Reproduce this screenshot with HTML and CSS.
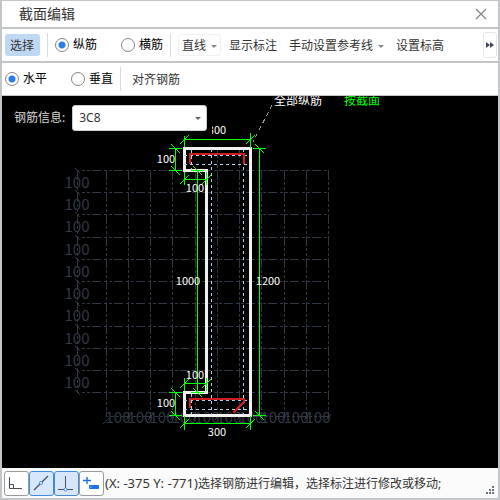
FILE: index.html
```html
<!DOCTYPE html>
<html lang="zh-CN">
<head>
<meta charset="utf-8">
<title>截面编辑</title>
<link rel="stylesheet" href="styles.css">
</head>
<body>
<main class="dialog">
  <header class="titlebar">
    <h1 class="title">截面编辑</h1>
    <button class="close" type="button" aria-label="关闭">
      <svg width="12" height="12" viewBox="0 0 12 12"><path d="M1 1L11 11M11 1L1 11" stroke="#858585" stroke-width="1.3" fill="none"/></svg>
    </button>
  </header>

  <div class="toolbar">
    <button class="tool selected" type="button">选择</button>
    <span class="divider"></span>
    <label class="option"><input type="radio" name="bar" checked>纵筋</label>
    <label class="option option-next"><input type="radio" name="bar">横筋</label>
    <span class="divider"></span>
    <button class="tool framed" type="button">直线<span class="arrow"></span></button>
    <button class="tool" type="button">显示标注</button>
    <button class="tool" type="button">手动设置参考线<span class="arrow"></span></button>
    <button class="tool" type="button">设置标高</button>
    <button class="more" type="button" aria-label="更多">
      <svg width="8" height="6" viewBox="0 0 8 6"><path d="M0 0L4 3L0 6ZM4 0L8 3L4 6Z" fill="#44485f"/></svg>
    </button>
  </div>

  <div class="toolbar toolbar-align">
    <label class="option"><input type="radio" name="dir" checked>水平</label>
    <label class="option option-next"><input type="radio" name="dir">垂直</label>
    <span class="divider"></span>
    <button class="tool" type="button">对齐钢筋</button>
  </div>

  <section class="canvas">
    <svg class="drawing" viewBox="2 96 496 372">
      <defs>
        <clipPath id="clip-top"><rect x="212" y="120" width="30" height="20"/></clipPath>
      </defs>
      <g class="grid">
        <path class="grid-h" d="M77 170.5H329M77 192.5H329M77 214.5H329M77 237.5H329M77 259.5H329M77 281.5H329M77 303.5H329M77 326.5H329M77 348.5H329M77 370.5H329M77 392.5H329"/>
        <path class="grid-v" d="M77.5 170V393M106.5 170V416M128.5 170V416M150.5 170V416M172.5 170V416M195.5 170V416M217.5 148V416M239.5 148V416M261.5 170V416M284.5 170V416M306.5 170V416M328.5 170V416"/>
        <path class="grid-h" d="M106 416.5H329"/>
        <path d="M75 168L80 173M75 190L80 195M75 212L80 217M75 235L80 240M75 257L80 262M75 279L80 284M75 301L80 306M75 324L80 329M75 346L80 351M75 368L80 373M75 390L80 395"/>
        <path d="M103 424L109 418M126 420L131 414M148 420L153 414M170 420L175 414M193 420L198 414M215 420L220 414M237 420L242 414M259 420L264 414M282 420L287 414M304 420L309 414M326 420L331 414"/>
      </g>
      <g class="grid-text">
        <text x="77" y="188">100</text><text x="77" y="210">100</text><text x="77" y="232">100</text><text x="77" y="255">100</text><text x="77" y="277">100</text><text x="77" y="299">100</text><text x="77" y="321">100</text><text x="77" y="344">100</text><text x="77" y="366">100</text><text x="77" y="388">100</text>
        <text x="118" y="423">100</text><text x="140" y="423">100</text><text x="162" y="423">100</text><text x="184" y="423">100</text><text x="207" y="423">100</text><text x="229" y="423">100</text><text x="251" y="423">100</text><text x="273" y="423">100</text><text x="296" y="423">100</text><text x="318" y="423">100</text>
      </g>
      <path class="leader" d="M272 105L253 142"/>
      <path class="outline" d="M184.5 148.5H250.5V415.5H184.5V392.5H206.5V170.5H184.5Z"/>
      <path class="guide" d="M184 155.5H251M184 164.5H251M184 400.5H251M184 409.5H251M191.5 150V170M191.5 394V414M211.5 149V415M243.5 149V415"/>
      <path class="rebar" d="M190 164V154H244V164M190 408V399H244V402L233 413"/>
      <g class="dim">
        <path d="M184.5 139.5H250.5M184.5 136V147M250.5 133V148M180 144L189 135M246 144L255 135"/>
        <path d="M175.5 148.5V170.5M169 148.5H182M169 170.5H182M171 144L180 153M171 166L180 175"/>
        <path d="M184.5 179.5H206.5M184.5 172V185M206.5 172V185M180 184L189 175M202 184L211 175"/>
        <path d="M197.5 170.5V392.5M191 170.5H204M191 392.5H204M193 166L202 175M193 388L202 397"/>
        <path d="M259.5 148.5V415.5M253 148.5H266M253 415.5H266M255 144L264 153M255 411L264 420"/>
        <path d="M184.5 383.5H206.5M184.5 378V391M206.5 378V391M180 388L189 379M202 388L211 379"/>
        <path d="M175.5 392.5V415.5M169 392.5H182M169 415.5H182M171 388L180 397M171 411L180 420"/>
        <path d="M184.5 423.5H250.5M184.5 416V430M250.5 416V430M180 428L189 419M246 428L255 419"/>
      </g>
      <g class="dim-text">
        <text x="217" y="134" clip-path="url(#clip-top)">300</text>
        <text x="166" y="163">100</text>
        <text x="195" y="192">100</text>
        <text x="188" y="285">1000</text>
        <text x="268" y="285">1200</text>
        <text x="195" y="379">100</text>
        <text x="166" y="407">100</text>
        <text x="217" y="436">300</text>
      </g>
      <text class="caption" x="274" y="105">全部纵筋</text>
      <text class="caption caption-on" x="344" y="105">按截面</text>
    </svg>
    <div class="info">
      <label for="rebar-info">钢筋信息:</label>
      <span class="combo">
        <select id="rebar-info"><option>3C8</option></select>
      </span>
    </div>
  </section>

  <footer class="status">
    <div class="snaps">
      <button class="snap" type="button" aria-label="正交">
        <svg width="23" height="23" viewBox="0 0 23 23"><path d="M4.500 5V16.500H17M4.500 12.500H8.500V16.500" stroke="#4a5060" fill="none"/></svg>
      </button>
      <button class="snap on" type="button" aria-label="中点">
        <svg width="23" height="23" viewBox="0 0 23 23"><path d="M4 18L18 4" stroke="#4a5060" stroke-width="1.200"/><circle cx="11" cy="11" r="1.500" fill="#fff" stroke="#3b8be8"/></svg>
      </button>
      <button class="snap on" type="button" aria-label="垂点">
        <svg width="23" height="23" viewBox="0 0 23 23"><path d="M10.500 4V17M3 17.500H18" stroke="#4a5060"/><circle cx="10.500" cy="17.500" r="1.500" fill="#fff" stroke="#3b8be8"/></svg>
      </button>
      <button class="snap" type="button" aria-label="动态输入">
        <svg width="23" height="23" viewBox="0 0 23 23"><path d="M7 5V12M3 8.500H11" stroke="#1673e6" stroke-width="1.400"/><rect x="9" y="13" width="10" height="4" rx="1" fill="#1673e6"/><path d="M11 14.500V16" stroke="#9cc6fa"/></svg>
      </button>
    </div>
    <output class="message"><span class="coords">(X: -375 Y: -771)</span>选择钢筋进行编辑，选择标注进行修改或移动;</output>
    <svg class="grip" width="9" height="9" viewBox="0 0 9 9"><path d="M6 0h2v2h-2zM3 3h2v2h-2zM6 3h2v2h-2zM0 6h2v2h-2zM3 6h2v2h-2zM6 6h2v2h-2z" fill="#6b7280"/></svg>
  </footer>
</main>
</body>
</html>
```
FILE: styles.css
```css
* {
  box-sizing: border-box;
}

body {
  margin: 0;
  background: #fff;
  color: #333;
  font: 12px/16px "Noto Sans", "Noto Sans CJK SC", sans-serif;
}

button {
  border: 0;
  padding: 0;
  background: none;
  color: inherit;
  font: inherit;
}

.dialog {
  display: flex;
  flex-direction: column;
  min-height: 100vh;
  border: 1px solid #c3c6c9;
  border-width: 1px 2px 2px;
}

.titlebar {
  display: flex;
  align-items: center;
  justify-content: space-between;
  padding: 2px 11px 2px 17px;
  height: 26px;
}

.title {
  margin: 0;
  font-size: 14px;
  font-weight: 400;
}

.close,
.close svg {
  display: block;
}

.toolbar {
  display: flex;
  align-items: center;
  height: 34px;
  padding: 0 1px 0 3px;
  border-top: 2px solid #c3c6c9;
}

.toolbar-align {
  height: 35px;
  border-bottom: 1px solid #c3c6c9;
}

.divider {
  width: 1px;
  height: 24px;
  margin: 0 7px;
  background: #dadada;
}

.tool {
  display: flex;
  align-items: center;
  height: 22px;
  padding: 2px 4px 0;
  margin-right: 4px;
  border-radius: 3px;
  white-space: nowrap;
}

.tool.selected {
  width: 35px;
  padding: 2px 5px 0;
  margin-right: 0;
  background: #bfd8f2;
}

.tool.framed {
  padding: 2px 3px 0;
  border: 1px solid #f0f0f0;
}

.arrow,
.combo::after {
  border: 3px solid transparent;
  border-top-color: #888;
  border-bottom: 0;
}

.arrow {
  margin-left: 5px;
}

.option {
  display: flex;
  align-items: center;
  gap: 4px;
  color: #000;
}

.option-next {
  margin-left: 24px;
}

.option input {
  appearance: none;
  width: 14px;
  height: 14px;
  margin: 0;
  border: 1px solid #858585;
  border-radius: 50%;
  background: #fff;
}

.option input:checked {
  background: radial-gradient(circle, #2a7de1 3px, #fff 4px);
}

.more {
  display: flex;
  align-items: center;
  justify-content: center;
  width: 14px;
  height: 26px;
  margin-left: auto;
  border: 1px solid #e6e6e6;
  border-radius: 3px;
}

.canvas {
  position: relative;
  flex: 1;
  overflow: hidden;
  background: #000;
}

.drawing {
  display: block;
  width: 100%;
  height: auto;
}

.drawing path {
  fill: none;
  shape-rendering: crispEdges;
}

.grid {
  stroke: #303844;
}

.grid-h {
  stroke-dasharray: 9 3 3 2 3 2;
  stroke-dashoffset: 7;
}

.grid-v {
  stroke-dasharray: 10 2 3 2 3 2;
}

.grid-text {
  fill: #303844;
  font-family: "Noto Sans CJK SC", sans-serif;
  font-size: 15px;
  text-anchor: middle;
}

.leader {
  stroke: #999;
  stroke-dasharray: 4 4;
}

.outline {
  stroke: #f2f0f1;
  stroke-width: 3;
}

.rebar {
  stroke: #cf1d20;
  stroke-width: 2;
}

.guide {
  stroke: #b3d2f2;
  stroke-dasharray: 3 3;
}

.dim {
  stroke: #00ff00;
}

.dim-text {
  fill: #fff;
  font-family: "Noto Sans CJK SC", sans-serif;
  font-size: 11px;
  text-anchor: middle;
}

.caption {
  fill: #fff;
  font-family: "Noto Sans CJK SC", sans-serif;
  font-size: 12px;
}

.caption-on {
  fill: #00ff00;
}

.info {
  position: absolute;
  top: 9px;
  left: 12px;
  display: flex;
  align-items: center;
  gap: 7px;
  color: #d8d8d8;
}

.combo {
  position: relative;
}

.combo::after {
  content: "";
  position: absolute;
  top: 12px;
  right: 6px;
  border-top-color: #5f6672;
}

.combo select {
  appearance: none;
  display: block;
  width: 135px;
  height: 26px;
  padding: 0 6px;
  border: 1px solid #c9ccd0;
  border-radius: 3px;
  background: #fff;
  color: #333;
  font: inherit;
}

.status {
  display: flex;
  align-items: center;
  height: 30px;
  padding: 0 3px 0 2px;
  background: #fbfbfb;
}

.snaps {
  display: flex;
}

.snap {
  width: 25px;
  height: 25px;
  border: 1px solid #9a9a9a;
  border-radius: 3px;
  background: #fff;
}

.snap svg {
  display: block;
}

.snap.on {
  border-color: #3f8be0;
  background: #d8e6fb;
}

.message {
  margin-left: 1px;
  white-space: nowrap;
}

.coords {
  font-size: 13px;
}

.grip {
  margin: 0 0 3px auto;
  align-self: flex-end;
}
```
